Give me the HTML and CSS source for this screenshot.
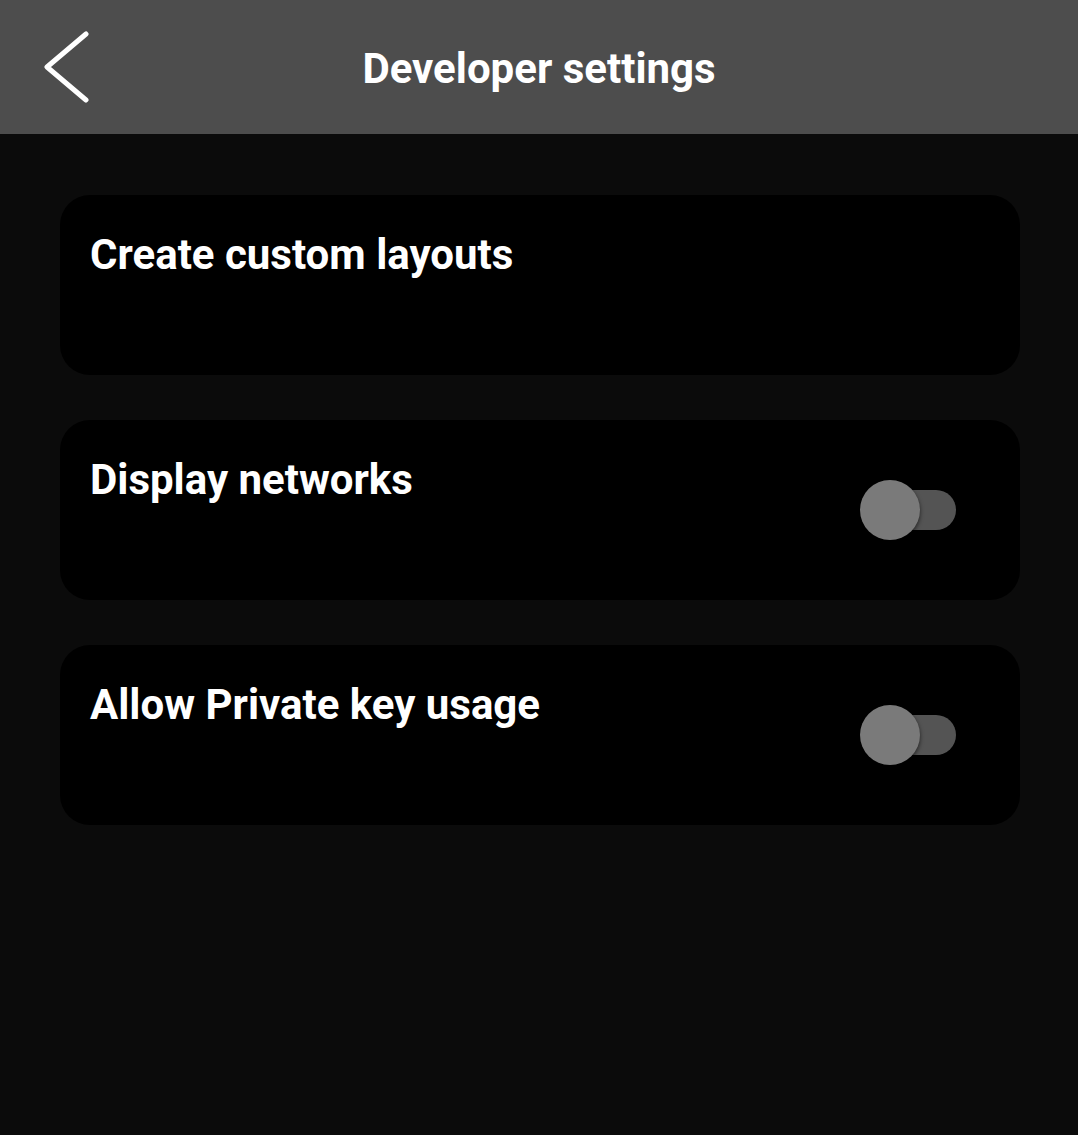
FILE: index.html
```html
<!DOCTYPE html>
<html lang="en">
<head>
<meta charset="utf-8">
<title>Developer settings</title>
<link rel="stylesheet" href="styles.css">
</head>
<body>
<header class="topbar">
  <button class="back" aria-label="Back">
    <svg width="50" height="76" viewBox="0 0 50 76">
      <polyline points="42,5 3,38 42,71" fill="none" stroke="#fff" stroke-width="5" stroke-linecap="round" stroke-linejoin="round"/>
    </svg>
  </button>
  <h1 class="title">Developer settings</h1>
</header>
<main class="list">
  <section class="card">
    <span class="label">Create custom layouts</span>
  </section>
  <section class="card">
    <span class="label">Display networks</span>
    <span class="switch"><span class="track"></span><span class="thumb"></span></span>
  </section>
  <section class="card">
    <span class="label">Allow Private key usage</span>
    <span class="switch"><span class="track"></span><span class="thumb"></span></span>
  </section>
</main>
</body>
</html>
```

FILE: styles.css
```css
html, body {
  margin: 0;
  padding: 0;
  background: #0b0b0b;
  height: 100%;
}
body {
  font-family: Roboto, "Liberation Sans", sans-serif;
  color: #fff;
}
.topbar {
  position: relative;
  height: 134px;
  background: #4d4d4d;
  display: flex;
  align-items: center;
  justify-content: center;
}
.back {
  position: absolute;
  left: 44px;
  top: 29px;
  padding: 0;
  border: 0;
  background: none;
  display: block;
  line-height: 0;
}
.title {
  margin: 0 0 0 0;
  font-size: 42px;
  font-weight: 700;
  line-height: 48px;
  padding-top: 4px;
}
.list {
  padding: 61px 58px 0 60px;
  display: flex;
  flex-direction: column;
  gap: 45px;
}
.card {
  height: 180px;
  box-sizing: border-box;
  background: #000;
  border-radius: 30px;
  padding: 37px 64px 0 30px;
  display: flex;
  justify-content: space-between;
  align-items: flex-start;
}
.label {
  font-size: 42px;
  font-weight: 700;
  line-height: 46px;
}
.switch {
  position: relative;
  align-self: center;
  width: 96px;
  height: 60px;
  margin-top: -37px;
}
.track {
  position: absolute;
  right: 0;
  top: 10px;
  width: 76px;
  height: 40px;
  border-radius: 20px;
  background: #545454;
}
.thumb {
  position: absolute;
  left: 0;
  top: 0;
  width: 60px;
  height: 60px;
  border-radius: 50%;
  background: #7a7a7a;
  box-shadow: 0 2px 4px rgba(0,0,0,0.6);
}
```
